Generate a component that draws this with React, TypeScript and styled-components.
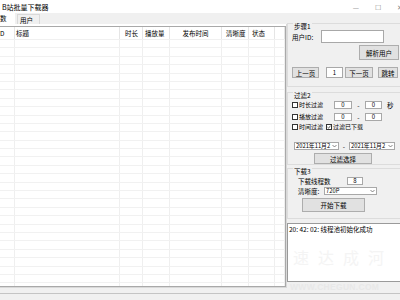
import React from "react";
import styled, { createGlobalStyle } from "styled-components";

const GlobalStyle = createGlobalStyle`
  html, body {
    margin: 0;
    padding: 0;
  }
  body {
    width: 400px;
    height: 300px;
    overflow: hidden;
    background: #f0f0f0;
    font-family: "Noto Sans CJK SC", "Noto Sans", sans-serif;
    font-size: 6.5px;
    line-height: 8px;
    color: #000;
  }
  * {
    box-sizing: border-box;
  }
`;

const Window = styled.div`
  display: flex;
  flex-direction: column;
  width: 400px;
  height: 300px;
`;

const TitleBar = styled.div`
  display: flex;
  align-items: center;
  height: 13px;
  padding-left: 2px;
  background: #fff;
`;

const Title = styled.div`
  flex: 1;
  font-size: 7px;
`;

const Controls = styled.div`
  display: flex;
  margin-right: -11px;
  color: #8a8a8a;
`;

const CtrlBtn = styled.span`
  width: 22px;
  text-align: center;
  font-size: 7px;
`;

const Body = styled.div`
  display: flex;
  height: 280px;
`;

const LeftCol = styled.div`
  display: flex;
  flex-direction: column;
  flex-shrink: 0;
  width: 287px;
`;

const Tabs = styled.div`
  display: flex;
  align-items: flex-end;
  height: 11px;
`;

const Tab = styled.div<{ $active?: boolean }>`
  height: ${(p) => (p.$active ? 11 : 10)}px;
  width: ${(p) => (p.$active ? 15 : 23)}px;
  margin-left: ${(p) => (p.$active ? 0 : 2)}px;
  padding-left: ${(p) => (p.$active ? 0 : 2)}px;
  background: ${(p) => (p.$active ? "#fff" : "#f0f0f0")};
  border: ${(p) => (p.$active ? "none" : "1px solid #d9d9d9")};
  border-bottom: none;
  line-height: 10px;
`;

const TabPage = styled.div`
  height: 264px;
  padding-top: 2px;
  background: #fff;
  border-right: 1px solid #d9d9d9;
  border-bottom: 1px solid #d9d9d9;
`;

const ListView = styled.div`
  height: 261px;
  overflow: hidden;
  border: 1px solid #a9a9a9;
  border-left: none;
  background: #fff;
`;

const cols = "15px 105px 23px 27px 52px 27px 26px 1fr";

const HeaderRow = styled.div`
  display: grid;
  grid-template-columns: ${cols};
  height: 13px;
  border-bottom: 1px solid #f0f0f0;
`;

const HeadCell = styled.div<{ $align?: string; $pad?: number }>`
  display: flex;
  align-items: center;
  justify-content: ${(p) => p.$align || "flex-start"};
  padding-left: ${(p) => p.$pad ?? 0}px;
  border-right: 1px solid #e5e5e5;
  white-space: nowrap;
  overflow: hidden;
`;

const Row = styled.div`
  display: grid;
  grid-template-columns: ${cols};
  height: 8.4px;
  border-bottom: 1px solid #f1f1f1;
`;

const Cell = styled.div`
  border-right: 1px solid #efefef;
`;

const RightCol = styled.div`
  position: relative;
  display: flex;
  flex-direction: column;
  flex-shrink: 0;
  width: 116px;
  overflow: hidden;
`;

const Group = styled.fieldset<{ $mt: number; $pb: number }>`
  margin: ${(p) => p.$mt}px 0 0 0;
  padding: 0 3px ${(p) => p.$pb}px 4px;
  border: 1px solid #dcdcdc;
  min-width: 0;
`;

const Legend = styled.legend`
  padding: 5px 1px 0;
  margin-left: 1px;
  line-height: 8px;
`;

const Line = styled.div<{ $mt?: number; $h?: number; $pl?: number }>`
  display: flex;
  align-items: center;
  margin-top: ${(p) => p.$mt ?? 0}px;
  height: ${(p) => p.$h ?? 8}px;
  padding-left: ${(p) => p.$pl ?? 0}px;
  white-space: nowrap;
`;

const EndLine = styled(Line)`
  justify-content: flex-end;
`;

const Label = styled.span<{ $w?: number; $ml?: number }>`
  width: ${(p) => (p.$w ? `${p.$w}px` : "auto")};
  margin-left: ${(p) => p.$ml ?? 0}px;
  flex-shrink: 0;
`;

const Input = styled.div<{ $w: number; $h?: number; $ml?: number }>`
  display: flex;
  align-items: center;
  justify-content: center;
  width: ${(p) => p.$w}px;
  height: ${(p) => p.$h ?? 8}px;
  margin-left: ${(p) => p.$ml ?? 0}px;
  flex-shrink: 0;
  background: #fff;
  border: 1px solid #a8a8a8;
  font-size: 6px;
`;

const Button = styled.div<{ $w: number; $h: number; $ml?: number }>`
  display: flex;
  align-items: center;
  justify-content: center;
  width: ${(p) => p.$w}px;
  height: ${(p) => p.$h}px;
  margin-left: ${(p) => p.$ml ?? 0}px;
  flex-shrink: 0;
  background: #e1e1e1;
  border: 1px solid #adadad;
`;

const Dash = styled.span<{ $w: number }>`
  width: ${(p) => p.$w}px;
  text-align: center;
  flex-shrink: 0;
`;

const CheckWrap = styled.span<{ $w?: number }>`
  display: flex;
  align-items: center;
  width: ${(p) => (p.$w ? `${p.$w}px` : "auto")};
  flex-shrink: 0;
  font-size: 6px;
`;

const Box = styled.span`
  display: flex;
  align-items: center;
  justify-content: center;
  width: 6px;
  height: 6px;
  margin-right: 1px;
  background: #fff;
  border: 1px solid #333;
`;

const Combo = styled.div<{ $w: number; $ml?: number }>`
  display: flex;
  align-items: center;
  width: ${(p) => p.$w}px;
  height: 8px;
  margin-left: ${(p) => p.$ml ?? 0}px;
  padding-left: 1px;
  flex-shrink: 0;
  background: #fff;
  border: 1px solid #a8a8a8;
  font-size: 5.8px;
  overflow: hidden;
`;

const ComboText = styled.span`
  flex: 1;
  overflow: hidden;
  white-space: nowrap;
`;

const LogBox = styled.div`
  margin-top: 4px;
  height: 59px;
  padding: 1px;
  background: #fff;
  border: 1px solid #9a9a9a;
  white-space: nowrap;
`;

const Mark = styled.div`
  position: absolute;
  left: 6px;
  top: 240px;
  font-size: 16px;
  letter-spacing: 9px;
  color: #f4f4f4;
  font-family: "Noto Sans CJK SC", serif;
  white-space: nowrap;
`;

const MarkUrl = styled.div`
  position: absolute;
  left: 3px;
  top: 270px;
  font-family: "Liberation Sans", sans-serif;
  font-weight: bold;
  font-size: 8.5px;
  letter-spacing: 0.3px;
  color: #e8e8e8;
  white-space: nowrap;
`;

const StatusBar = styled.div`
  flex: 1;
  border-top: 1px solid #c4c4c4;
  background: #f0f0f0;
`;

const Arrow = () => (
  <svg width="5" height="4" viewBox="0 0 5 4" style={{ marginRight: 1, flexShrink: 0 }}>
    <polyline points="0.5,1 2.5,3 4.5,1" fill="none" stroke="#555" strokeWidth="0.7" />
  </svg>
);

const Check = ({ checked, label, w }: { checked?: boolean; label: string; w?: number }) => (
  <CheckWrap $w={w}>
    <Box>
      {checked && (
        <svg width="4" height="4" viewBox="0 0 5 5">
          <polyline points="0.6,2.6 2,4 4.4,0.8" fill="none" stroke="#222" strokeWidth="0.9" />
        </svg>
      )}
    </Box>
    {label}
  </CheckWrap>
);

const App = () => {
  const rows = Array.from({ length: 31 });
  return (
    <Window>
      <GlobalStyle />
      <TitleBar>
        <Title>B站批量下载器</Title>
        <Controls>
          <CtrlBtn>—</CtrlBtn>
          <CtrlBtn>☐</CtrlBtn>
          <CtrlBtn>✕</CtrlBtn>
        </Controls>
      </TitleBar>
      <Body>
        <LeftCol>
          <Tabs>
            <Tab $active>数</Tab>
            <Tab>用户</Tab>
          </Tabs>
          <TabPage>
            <ListView>
              <HeaderRow>
                <HeadCell>D</HeadCell>
                <HeadCell $pad={1}>标题</HeadCell>
                <HeadCell $pad={5}>时长</HeadCell>
                <HeadCell $pad={2}>播放量</HeadCell>
                <HeadCell $align="center">发布时间</HeadCell>
                <HeadCell $pad={4}>清晰度</HeadCell>
                <HeadCell $pad={3}>状态</HeadCell>
                <HeadCell />
              </HeaderRow>
              {rows.map((_, i) => (
                <Row key={i}>
                  {Array.from({ length: 8 }).map((__, j) => (
                    <Cell key={j} />
                  ))}
                </Row>
              ))}
            </ListView>
          </TabPage>
        </LeftCol>
        <RightCol>
          <Group $mt={4} $pb={8}>
            <Legend>步骤1</Legend>
            <Line $h={13}>
              <Label $w={29}>用户ID:</Label>
              <Input $w={63} $h={13} />
            </Line>
            <EndLine $mt={2} $h={15}>
              <Button $w={40} $h={15}>解析用户</Button>
            </EndLine>
            <Line $mt={7} $h={11}>
              <Button $w={27} $h={11}>上一页</Button>
              <Input $w={17} $h={11} $ml={7}>1</Input>
              <Button $w={28} $h={11} $ml={2}>下一页</Button>
              <Button $w={20} $h={11} $ml={5}>跳转</Button>
            </Line>
          </Group>
          <Group $mt={-1} $pb={0}>
            <Legend>过滤2</Legend>
            <Line $mt={2}>
              <Check label="时长过滤" w={42} />
              <Input $w={18}>0</Input>
              <Dash $w={13}>-</Dash>
              <Input $w={17}>0</Input>
              <Label $ml={5}>秒</Label>
            </Line>
            <Line $mt={4}>
              <Check label="播放过滤" w={42} />
              <Input $w={18}>0</Input>
              <Dash $w={13}>-</Dash>
              <Input $w={17}>0</Input>
            </Line>
            <Line $mt={2}>
              <Check label="时间过滤" w={34} />
              <Check checked label="过滤已下载" />
            </Line>
            <Line $mt={10} $h={9} $pl={2}>
              <Combo $w={45}>
                <ComboText>2021年11月2</ComboText>
                <Arrow />
              </Combo>
              <Dash $w={10}>-</Dash>
              <Combo $w={46}>
                <ComboText>2021年11月2</ComboText>
                <Arrow />
              </Combo>
            </Line>
            <Line $mt={3} $h={11}>
              <Button $w={58} $h={11} $ml={22}>过滤选择</Button>
            </Line>
          </Group>
          <Group $mt={-3} $pb={6}>
            <Legend>下载3</Legend>
            <Line $mt={2} $pl={6}>
              <Label $w={49}>下载线程数</Label>
              <Input $w={16}>8</Input>
            </Line>
            <Line $mt={2} $pl={6}>
              <Label $w={26}>清晰度:</Label>
              <Combo $w={53}>
                <ComboText>720P</ComboText>
                <Arrow />
              </Combo>
            </Line>
            <Line $mt={3} $h={14}>
              <Button $w={63} $h={14} $ml={10}>开始下载</Button>
            </Line>
          </Group>
          <LogBox>20: 42: 02: 线程池初始化成功</LogBox>
          <Mark>速达成河</Mark>
          <MarkUrl>WWW.CHEGUN.COM</MarkUrl>
        </RightCol>
      </Body>
      <StatusBar />
    </Window>
  );
};

export default App;
